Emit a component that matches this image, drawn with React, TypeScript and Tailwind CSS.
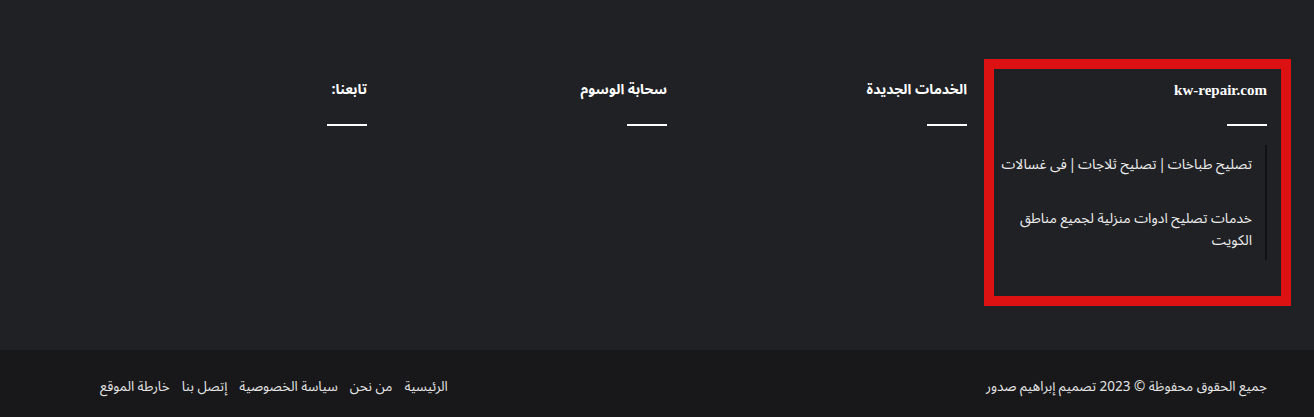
const arabic = "font-['Noto_Sans_Arabic','DejaVu_Sans',sans-serif]";

function Heading({ children, serif }: { children: React.ReactNode; serif?: boolean }) {
  return (
    <div>
      <h3
        className={
          serif
            ? "font-['Liberation_Serif',serif] font-bold text-[15px] leading-[20px] text-white"
            : "font-bold text-[14px] leading-[20px] text-white"
        }
      >
        {children}
      </h3>
      <div className="mt-[24px] h-[2px] w-[40px] bg-white" />
    </div>
  );
}

export default function App() {
  return (
    <div dir="rtl" className={`${arabic} w-[1314px]`}>
      <section className="h-[350px] bg-[#202125] pt-[59px] pr-[23px]">
        <div className="flex items-start">
          {/* first column, boxed in red */}
          <div className="w-[307px] h-[247px] border-[10px] border-[#dc1212] pt-[11px] pr-[14px]">
            <Heading serif>kw-repair.com</Heading>
            <ul className="mt-[19px] border-r-2 border-[#111113] pt-[9px] pb-[8px] pr-[13px] flex flex-col gap-[32px] text-[14px] leading-[22px] text-[#ececec]">
              <li>تصليح طباخات{"\u2009|\u2009"}تصليح ثلاجات{"\u2009|\u2009"}فى غسالات</li>
              <li className="w-[240px]">خدمات تصليح ادوات منزلية لجميع مناطق الكويت</li>
            </ul>
          </div>
          <div className="w-[300px] mr-[17px] pt-[21px]">
            <Heading>الخدمات الجديدة</Heading>
          </div>
          <div className="w-[300px] pt-[21px]">
            <Heading>سحابة الوسوم</Heading>
          </div>
          <div className="w-[300px] pt-[21px]">
            <Heading>تابعنا:</Heading>
          </div>
        </div>
      </section>
      <footer className="h-[67px] bg-[#18181a] flex items-center justify-between pr-[47px] pl-[100px] pt-[7px] text-[13.5px] text-[#e4e4e4]">
        <p>جميع الحقوق محفوظة © 2023 تصميم إبراهيم صدور</p>
        <ul className="flex gap-[12px]">
          <li>الرئيسية</li>
          <li>من نحن</li>
          <li>سياسة الخصوصية</li>
          <li>إتصل بنا</li>
          <li>خارطة الموقع</li>
        </ul>
      </footer>
    </div>
  );
}
